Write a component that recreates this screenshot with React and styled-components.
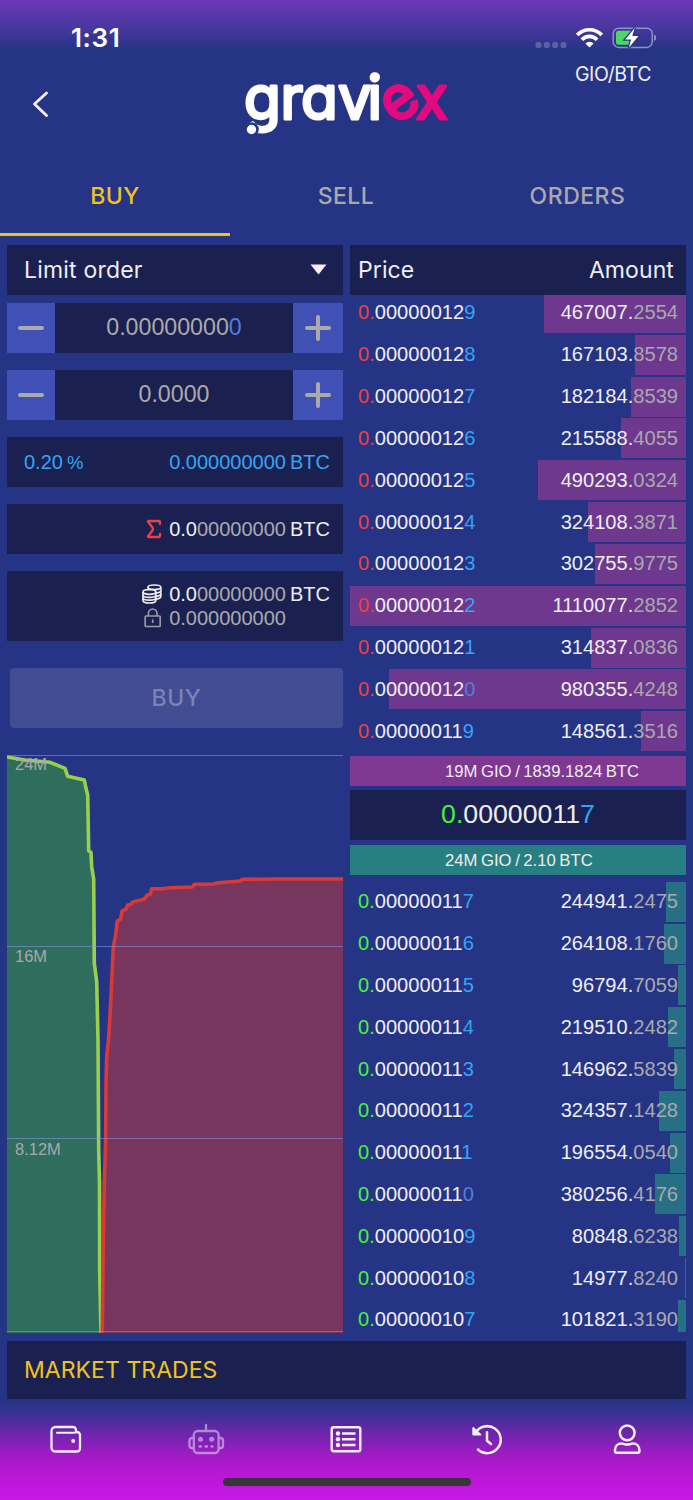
import React from "react";
import styled, { createGlobalStyle } from "styled-components";
import { Sigma } from "lucide-react";

const GlobalStyle = createGlobalStyle`
  * { box-sizing: border-box; }
  body { margin: 0; background: #263485; }
`;

const ui = `Inter, "Liberation Sans", sans-serif`;
const figures = `"Liberation Sans", Arial, sans-serif`;
const dark = "#1a2150";

const Screen = styled.div`
  width: 693px;
  height: 1500px;
  overflow: hidden;
  display: flex;
  flex-direction: column;
  background: linear-gradient(#6c39b8 0, #4a37a0 26px, #263485 50px, #263485 100%);
  color: #eeeef0;
  font-family: ${figures};
`;

const StatusBar = styled.div`
  height: 62px;
  padding: 13px 36px 0 71px;
  display: flex;
  justify-content: space-between;
  align-items: center;
`;

const Clock = styled.span`
  font: 600 26px/30px ${ui};
  letter-spacing: 0.6px;
  color: #fff;
  padding-top: 1px;
`;

const Header = styled.header`
  height: 93px;
  padding: 0 42px 0 32px;
  display: grid;
  grid-template-columns: 204px 1fr 120px;
`;

const BackButton = styled.div`
  padding-top: 28px;
`;

const Pair = styled.div`
  text-align: right;
  font: 400 19.5px/24px ${ui};
  letter-spacing: -0.4px;
`;

const Tabs = styled.nav`
  height: 82px;
  display: grid;
  grid-template-columns: 230px 232px 231px;
`;

const Tab = styled.div`
  display: flex;
  justify-content: center;
  align-items: center;
  height: 81px;
  padding-top: 3px;
  border-bottom: 3px solid ${(p) => (p.$active ? "#efc31f" : "transparent")};
  color: ${(p) => (p.$active ? "#efc31f" : "#a9a9ad")};
  font: 500 23px/28px ${ui};
  letter-spacing: 0.5px;
`;

const Columns = styled.main`
  display: grid;
  grid-template-columns: 336px 336px;
  column-gap: 7px;
  padding: 8px 7px 0;
  height: 1096px;
  flex: none;
`;

const Column = styled.section`
  display: flex;
  flex-direction: column;
  min-width: 0;
`;

const Select = styled.div`
  height: 49.5px;
  margin-bottom: 8.5px;
  background: ${dark};
  display: flex;
  justify-content: space-between;
  align-items: center;
  padding: 0 16px 0 17px;
  font: 400 23px/28px ${ui};
  letter-spacing: 0.2px;
`;

const Stepper = styled.div`
  height: 50px;
  margin-bottom: 17px;
  display: grid;
  grid-template-columns: 48px 1fr 50px;
  background: ${dark};
`;

const StepButton = styled.div`
  background: #4050b5;
  display: flex;
  align-items: center;
  justify-content: center;
`;

const StepValue = styled.div`
  text-align: center;
  font-size: 23.2px;
  line-height: 48px;
  color: #aaa;
`;

const InfoBox = styled.div`
  height: ${(p) => p.$height || 50}px;
  margin-bottom: 17px;
  background: ${dark};
  padding: 0 13px 0 17px;
  display: flex;
  flex-direction: column;
  justify-content: center;
`;

const InfoLine = styled.div`
  display: flex;
  align-items: center;
  justify-content: ${(p) => (p.$spread ? "space-between" : "flex-end")};
  height: 24px;
  font-size: 20px;
  color: ${(p) => p.$color || "#eeeef0"};
`;

const Value = styled.span`
  white-space: pre;
  word-spacing: -1.5px;
`;

const Unit = styled.span`
  font-size: 18.5px;
`;

const IconSlot = styled.span`
  display: flex;
  justify-content: center;
  width: ${(p) => p.$width || 22}px;
  margin-right: ${(p) => p.$gap || 6}px;
`;

const Hidden = styled.span`
  visibility: hidden;
`;

const Tone = styled.span`
  color: ${(p) => p.$color};
`;

const BuyButton = styled.div`
  height: 60px;
  margin: 10px 0 27px 3px;
  border-radius: 4px;
  background: #414c92;
  color: #7983b6;
  display: flex;
  align-items: center;
  justify-content: center;
  font: 500 23px/28px ${ui};
  letter-spacing: 0.6px;
`;

const BookHeader = styled.div`
  flex: none;
  height: 50px;
  padding: 0 12px 0 8px;
  background: ${dark};
  display: flex;
  align-items: center;
  justify-content: space-between;
  font: 400 23px/28px ${ui};
  letter-spacing: 0.1px;
`;

const Book = styled.div`
  flex: none;
  height: ${(p) => p.$height}px;
  overflow: hidden;
  display: flex;
  flex-direction: column;
  justify-content: ${(p) => (p.$bottom ? "flex-end" : "flex-start")};
`;

const Row = styled.div`
  flex: none;
  height: 40px;
  margin-bottom: 1.83px;
  padding: 0 8px 1px 8px;
  display: flex;
  align-items: center;
  justify-content: space-between;
  font-size: 20.1px;
  line-height: 38px;
  background: linear-gradient(${(p) => p.$bar}, ${(p) => p.$bar}) right top / ${(p) => p.$width}px 100% no-repeat;
`;

const Total = styled.div`
  flex: none;
  height: 30px;
  padding-left: 95px;
  background: ${(p) => p.$bg};
  font-size: 16.7px;
  line-height: 31px;
  word-spacing: -1.1px;
  white-space: nowrap;
`;

const LastPrice = styled.div`
  flex: none;
  height: 50px;
  margin: 4px 0 5.5px;
  background: ${dark};
  text-align: center;
  font-size: 26.7px;
  line-height: 49px;
`;

const Spacer = styled.div`
  flex: none;
  height: ${(p) => p.$height}px;
`;

const Trades = styled.div`
  flex: none;
  height: 58px;
  margin: 8px 7px 0;
  padding-left: 17px;
  background: ${dark};
  color: #efc31f;
  font: 400 23px/58px ${ui};
  letter-spacing: 0.05px;
`;

const Footer = styled.footer`
  flex: none;
  height: 101px;
  background: linear-gradient(#263485 0, #35318f 12px, #6527a8 31px, #9c1cc2 54px, #b618d2 72px, #c817e6 101px);
  display: flex;
  flex-direction: column;
  align-items: center;
  justify-content: space-between;
  padding: 21px 0 14px;
`;

const NavRow = styled.div`
  width: 702px;
  display: flex;
  justify-content: space-between;
`;

const NavItem = styled.div`
  width: 140.4px;
  display: flex;
  justify-content: center;
  opacity: ${(p) => (p.$dim ? 0.5 : 1)};
`;

const HomeBar = styled.div`
  width: 248px;
  height: 8px;
  border-radius: 4px;
  background: #363537;
`;

const StatusIcons = () => (
  <svg width="122" height="24" viewBox="535 26 122 24" style={{ display: "block" }}>
    <g fill="#5a60a4">
      <rect x="535.5" y="42" width="6" height="6" rx="2" />
      <rect x="543.8" y="42" width="6" height="6" rx="2" />
      <rect x="552.1" y="42" width="6" height="6" rx="2" />
      <rect x="560.5" y="42" width="6" height="6" rx="2" />
    </g>
    <g fill="none" stroke="#fff" strokeWidth="3.7">
      <path d="M577.2 35a17 17 0 0 1 24.600 0" />
      <path d="M581.900 39.700a10.400 10.400 0 0 1 15.200 0" />
    </g>
    <path d="M589.500 47.600l-4.100-4.200a5.900 5.900 0 0 1 8.200 0z" fill="#fff" />
    <rect x="613.2" y="28.200" width="39" height="19.200" rx="5.500" fill="none" stroke="#8e92c3" strokeWidth="1.500" />
    <path d="M654 34.500q2.200.6 2.200 3.300t-2.200 3.300z" fill="#8e92c3" />
    <path d="M618.500 30.800H634l-7.500 9h5.500l-2.500 5h-11a2.500 2.500 0 0 1-2.500-2.500v-9a2.500 2.500 0 0 1 2.500-2.500z" fill="#4bd964" />
    <path d="M634.700 28l-9.500 11.500h6l-2.400 8.300 9.700-11.700h-6.200z" fill="#fff" stroke="#2d3589" strokeWidth="2.600" paintOrder="stroke" />
  </svg>
);

const Logo = () => (
  <svg width="226" height="80" viewBox="236 62 226 80" style={{ display: "block", overflow: "visible" }}>
    <g
      fontFamily='Inter, "Liberation Sans", sans-serif'
      fontWeight="400"
      fontSize="60"
      strokeWidth="3"
      strokeLinejoin="round"
      style={{ fontFeatureSettings: '"cv11"' }}
    >
      <text x="244 280.5 301 338 367.5" y="118.500" fill="#fff" stroke="#fff">gravi</text>
      <g fill="#e5097f" stroke="#e5097f">
        <text x="382.500" y="118.500" transform="rotate(-36 400 102)">e</text>
        <text x="415.500" y="118.500">x</text>
      </g>
    </g>
    <circle cx="374.500" cy="78.200" r="4.300" fill="#fff" />
    <circle cx="251.500" cy="129.500" r="6" fill="#fff" stroke="#263485" strokeWidth="2.600" />
  </svg>
);

const Minus = () => (
  <svg width="26" height="26"><path d="M2 13h22" stroke="#aaa" strokeWidth="4" strokeLinecap="round" /></svg>
);
const Plus = () => (
  <svg width="26" height="26"><path d="M2 13h22M13 2v22" stroke="#aaa" strokeWidth="4" strokeLinecap="round" /></svg>
);

const Coins = () => (
  <svg width="20" height="20" viewBox="0 0 20 20" fill={dark} stroke="#eee" strokeWidth="1.700">
    <path d="M6 3.500v9c0 1.500 3 2.500 6.500 2.500s6.300-1 6.300-2.500v-9" />
    <path d="M6 6.500c0 1.500 3 2.500 6.500 2.500s6.300-1 6.300-2.500M6 9.700c0 1.500 3 2.500 6.500 2.500s6.300-1 6.300-2.500" />
    <ellipse cx="12.400" cy="3.300" rx="6.400" ry="2.300" />
    <path d="M1 8v8.500c0 1.500 3 2.500 6.400 2.500s6.400-1 6.400-2.500V8" />
    <path d="M1 11c0 1.500 3 2.400 6.400 2.400s6.400-.9 6.400-2.400M1 13.800c0 1.500 3 2.400 6.400 2.400s6.400-.9 6.400-2.400" />
    <ellipse cx="7.400" cy="8" rx="6.400" ry="2.300" />
  </svg>
);

const Lock = () => (
  <svg width="20" height="20" viewBox="-2 0 20 20" fill="none" stroke="#999ba3" strokeWidth="1.700">
    <rect x="1.200" y="8" width="15" height="10.500" rx=".8" />
    <path d="M4.400 8V5.300a4.300 4.300 0 0 1 8.600 0V8M8.700 11.500v3.500" />
  </svg>
);

const WalletIcon = () => (
  <svg width="38" height="38" viewBox="0 0 38 38" fill="none" stroke="#f3eef8" strokeWidth="2.300" strokeLinecap="round">
    <path d="M29 12V10a3 3 0 0 0-3-3H8.500a4 4 0 0 0-4 4v16.500a4 4 0 0 0 4 4h21.500a3 3 0 0 0 3-3V15a3 3 0 0 0-3-3h-1" />
    <path d="M10 12.800h18" strokeWidth="2" />
    <circle cx="26.200" cy="21" r="2" fill="#f3eef8" stroke="none" />
  </svg>
);

const RobotIcon = () => (
  <svg width="38" height="38" viewBox="0 0 38 38" fill="none" stroke="#f3eef8" strokeWidth="2.300" strokeLinecap="round">
    <path d="M19 5v6" />
    <rect x="6.800" y="11" width="24.800" height="22" rx="4" />
    <path d="M6.500 18H5a2.500 2.500 0 0 0-2.500 2.500v5A2.500 2.500 0 0 0 5 28h1.500M32 18h1.500a2.500 2.500 0 0 1 2.500 2.500v5a2.500 2.500 0 0 1-2.500 2.500H32" />
    <path d="M12.500 26.500h1.500M18.500 26.500h1.500M24.500 26.500h1" />
    <g fill="#f3eef8" stroke="none"><circle cx="13.500" cy="19.300" r="2.500" /><circle cx="24.700" cy="19.300" r="2.500" /></g>
  </svg>
);

const ListIcon = () => (
  <svg width="38" height="38" viewBox="0 0 38 38" fill="none" stroke="#f3eef8" strokeWidth="2.400">
    <rect x="4.700" y="7.300" width="28.600" height="24" rx="2" />
    <path d="M15 13.500h13.500M15 19.200h13.500M15 25h13.500" strokeWidth="2.500" />
    <g fill="#f3eef8" stroke="none"><circle cx="11" cy="13.500" r="2.200" /><circle cx="11" cy="19.200" r="2.200" /><circle cx="11" cy="25" r="2.200" /></g>
  </svg>
);

const HistoryIcon = () => (
  <svg width="38" height="38" viewBox="0 0 38 38" fill="none" stroke="#f3eef8" strokeWidth="2.500" strokeLinecap="round" strokeLinejoin="round">
    <path d="M7.500 13a13.500 13.500 0 1 1 2.500 16.500" />
    <path d="M19 12.300v8.500l4 3.200" />
    <path d="M5.200 8v6.600h7.200z" fill="#f3eef8" strokeWidth="1.800" />
  </svg>
);

const UserIcon = () => (
  <svg width="38" height="38" viewBox="0 0 38 38" fill="none" stroke="#f3eef8" strokeWidth="2.500" strokeLinejoin="round">
    <circle cx="19.200" cy="12.800" r="7.400" />
    <path d="M13.500 23.600c2.200 0 3.200 1 5.700 1s3.500-1 5.700-1c4.200 0 6.500 3 6.500 6.500v1.500a1.200 1.200 0 0 1-1.200 1.200h-22a1.200 1.200 0 0 1-1.200-1.200v-1.500c0-3.500 2.300-6.500 6.500-6.500z" />
  </svg>
);

const bidLine =
  "0,2 18,5 43,7.3 58,13.3 60.700,21.300 77.300,25 79,33.300 80.700,40 81.700,96 84,97.300 84.700,111.700 86.700,124 87.300,208.300 89.700,226.700 91,285 91.700,395 92.500,428 92.700,518 94,578";
const askLine =
  "95.300,578 96.300,485 97.300,428 98.700,382 99,328 99.700,302 101.300,287 103,260.700 104.300,235 106.300,191.700 108.700,180 110.300,166 113.700,164 115,156 119,154 120.700,150.300 124,149.300 126.300,146.700 137,144.300 140,140.300 143.300,139 144.700,133.700 156.300,133.700 163,132.700 185.300,132 187.300,129.300 206.300,129 211.300,127.700 233,126 235.300,124.300 266.300,124 336,124";

const DepthChart = () => (
  <svg width="336" height="578" viewBox="0 0 336 578" style={{ display: "block", flex: "none" }}>
    <polygon points={`0,578 ${bidLine}`} fill="#2f6e5c" />
    <polygon points={`${askLine} 336,578`} fill="#78365f" />
    <g fill="none" strokeWidth="3.600" strokeLinejoin="round">
      <polyline points={bidLine} stroke="#98cf4e" />
      <polyline points={askLine} stroke="#d93a36" />
    </g>
    <path d="M0 .5h336M0 191.500h336M0 383.500h336M0 576.500h336" stroke="#8094d8" strokeOpacity=".6" />
    <g fill="#a9a9ad" fontFamily='"Liberation Sans", sans-serif' fontSize="16.500">
      <text x="8" y="14.700">24M</text>
      <text x="8" y="207">16M</text>
      <text x="8" y="399.500">8.12M</text>
    </g>
  </svg>
);

const asks = [
  ["129", "467007", "2554", 142],
  ["128", "167103", "8578", 51],
  ["127", "182184", "8539", 55],
  ["126", "215588", "4055", 65],
  ["125", "490293", "0324", 148],
  ["124", "324108", "3871", 98],
  ["123", "302755", "9775", 91],
  ["122", "1110077", "2852", 336],
  ["121", "314837", "0836", 95],
  ["120", "980355", "4248", 297],
  ["119", "148561", "3516", 45],
];

const bids = [
  ["117", "244941", "2475", 20],
  ["116", "264108", "1760", 22],
  ["115", "96794", "7059", 8],
  ["114", "219510", "2482", 18],
  ["113", "146962", "5839", 12],
  ["112", "324357", "1428", 27],
  ["111", "196554", "0540", 16],
  ["110", "380256", "4176", 31],
  ["109", "80848", "6238", 7],
  ["108", "14977", "8240", 1],
  ["107", "101821", "3190", 8],
];

const Price = ({ tail, lead }) => (
  <span>
    <Tone $color={lead}>0.</Tone>000000{tail.slice(0, 2)}
    <Tone $color={tail[2] === "0" ? "#4f7fdc" : "#32a5f5"}>{tail[2]}</Tone>
  </span>
);

const BookRow = ({ row, lead, bar }) => (
  <Row $bar={bar} $width={row[3]}>
    <Price tail={row[0]} lead={lead} />
    <span>{row[1]}.<Tone $color="#a9a9ad">{row[2]}</Tone></span>
  </Row>
);

const red = "#ee4040";
const green = "#45f23c";

export default function App() {
  return (
    <Screen>
      <GlobalStyle />
      <StatusBar>
        <Clock>1:31</Clock>
        <StatusIcons />
      </StatusBar>
      <Header>
        <BackButton>
          <svg width="18" height="28" viewBox="0 0 18 28" fill="none" stroke="#f0f0f2" strokeWidth="2.900" strokeLinecap="round" strokeLinejoin="round">
            <path d="M14.500 3L2.500 14l12 11.500" />
          </svg>
        </BackButton>
        <Logo />
        <Pair>GIO/BTC</Pair>
      </Header>
      <Tabs>
        <Tab $active>BUY</Tab>
        <Tab>SELL</Tab>
        <Tab>ORDERS</Tab>
      </Tabs>
      <Columns>
        <Column>
          <Select>
            Limit order
            <svg width="17" height="11"><path d="M.5.5h16l-8 10z" fill="#f3f1f4" /></svg>
          </Select>
          <Stepper>
            <StepButton><Minus /></StepButton>
            <StepValue>0.00000000<Tone $color="#4f7fdc">0</Tone></StepValue>
            <StepButton><Plus /></StepButton>
          </Stepper>
          <Stepper>
            <StepButton><Minus /></StepButton>
            <StepValue>0.0000</StepValue>
            <StepButton><Plus /></StepButton>
          </Stepper>
          <InfoBox>
            <InfoLine $spread $color="#32a5f5">
              <Value>0.20 <Unit>%</Unit></Value>
              <Value>0.000000000 BTC</Value>
            </InfoLine>
          </InfoBox>
          <InfoBox>
            <InfoLine>
              <IconSlot $width={24} $gap={3}><Sigma size={24} color={red} strokeWidth={2.3} /></IconSlot>
              <Value>0.0<Tone $color="#a9a9ad">00000000</Tone> BTC</Value>
            </InfoLine>
          </InfoBox>
          <InfoBox $height={70}>
            <InfoLine>
              <IconSlot><Coins /></IconSlot>
              <Value>0.0<Tone $color="#a9a9ad">00000000</Tone> BTC</Value>
            </InfoLine>
            <InfoLine $color="#a9a9ad">
              <IconSlot><Lock /></IconSlot>
              <Value>0.000000000<Hidden> BTC</Hidden></Value>
            </InfoLine>
          </InfoBox>
          <BuyButton>BUY</BuyButton>
          <DepthChart />
        </Column>
        <Column>
          <BookHeader><span>Price</span><span>Amount</span></BookHeader>
          <Book $height={460.5} $bottom>
            {asks.map((r) => <BookRow key={r[0]} row={r} lead={red} bar="#6e388f" />)}
            <Spacer $height={2.5} />
          </Book>
          <Total $bg="#7e3891">19M GIO / 1839.1824 BTC</Total>
          <LastPrice><Price tail="117" lead={green} /></LastPrice>
          <Total $bg="#277f82">24M GIO / 2.10 BTC</Total>
          <Spacer $height={6.7} />
          <Book $height={450.3}>
            {bids.map((r) => <BookRow key={r[0]} row={r} lead={green} bar="#276f85" />)}
          </Book>
        </Column>
      </Columns>
      <Trades>MARKET TRADES</Trades>
      <Footer>
        <NavRow>
          <NavItem><WalletIcon /></NavItem>
          <NavItem $dim><RobotIcon /></NavItem>
          <NavItem><ListIcon /></NavItem>
          <NavItem><HistoryIcon /></NavItem>
          <NavItem><UserIcon /></NavItem>
        </NavRow>
        <HomeBar />
      </Footer>
    </Screen>
  );
}
